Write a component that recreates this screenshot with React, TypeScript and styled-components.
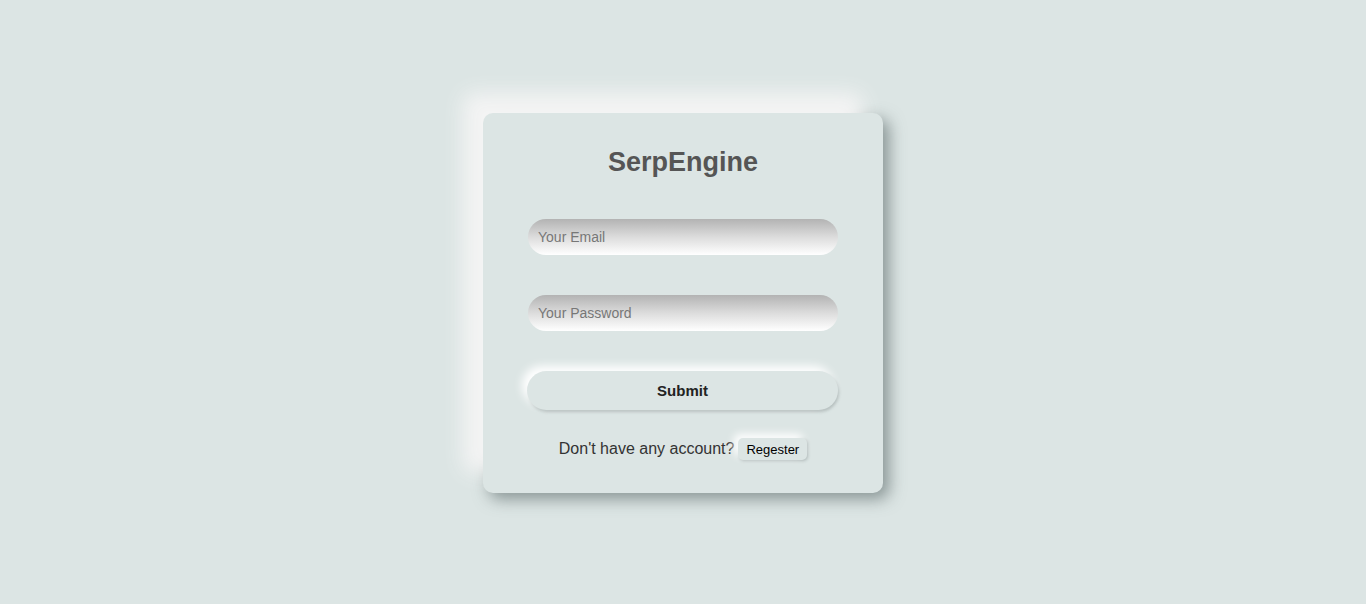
import React from "react";
import styled, { createGlobalStyle } from "styled-components";

const Global = createGlobalStyle`
  html, body { margin: 0; padding: 0; }
  body {
    background: #dce5e4;
    font-family: "Liberation Sans", Arial, sans-serif;
  }
  * { box-sizing: border-box; }
`;

const Page = styled.div`
  height: 604px;
  padding-top: 2px;
  display: flex;
  align-items: center;
  justify-content: center;
`;

const Card = styled.form`
  width: 400px;
  height: 380px;
  background: #dce5e4;
  border-radius: 10px;
  box-shadow: -20px -20px 20px #f4f4f4, 6px 6px 16px rgba(80, 95, 95, 0.6);
  display: flex;
  flex-direction: column;
  align-items: center;
  padding: 34px 45px 0;
`;

const Title = styled.h1`
  margin: 0 0 41px;
  font-size: 27px;
  line-height: 31px;
  font-weight: bold;
  color: #555;
`;

const Input = styled.input`
  width: 310px;
  height: 36px;
  border: none;
  outline: none;
  border-radius: 18px;
  padding: 0 10px;
  margin-bottom: 40px;
  font-family: "Liberation Sans", Arial, sans-serif;
  font-size: 14px;
  color: #444;
  background: linear-gradient(to bottom, #b3b3b3 0%, #dcdcdc 50%, #ffffff 100%);
  &::placeholder { color: #777; }
`;

const Submit = styled.button`
  width: 311px;
  height: 39px;
  margin-left: -1px;
  border: none;
  border-radius: 20px;
  background: #dce5e4;
  font-family: "Liberation Sans", Arial, sans-serif;
  font-size: 15px;
  font-weight: bold;
  color: #222;
  box-shadow: -5px -5px 10px #ffffff, 1px 2px 3px rgba(120, 130, 130, 0.4);
  margin-bottom: 28px;
  cursor: pointer;
`;

const Footer = styled.div`
  display: flex;
  align-items: center;
  gap: 4px;
  font-size: 16px;
  color: #333;
`;

const Register = styled.button`
  height: 22px;
  padding: 0 8px;
  border: none;
  border-radius: 5px;
  background: #dce5e4;
  font-family: "Liberation Sans", Arial, sans-serif;
  font-size: 13px;
  color: #000;
  box-shadow: -4px -4px 8px #ffffff, 1px 1px 3px rgba(120, 130, 130, 0.45);
  cursor: pointer;
`;

export default function App() {
  return (
    <>
      <Global />
      <Page>
        <Card onSubmit={(e) => e.preventDefault()}>
          <Title>SerpEngine</Title>
          <Input type="email" placeholder="Your Email" />
          <Input type="password" placeholder="Your Password" />
          <Submit type="submit">Submit</Submit>
          <Footer>
            Don't have any account?
            <Register type="button">Regester</Register>
          </Footer>
        </Card>
      </Page>
    </>
  );
}
